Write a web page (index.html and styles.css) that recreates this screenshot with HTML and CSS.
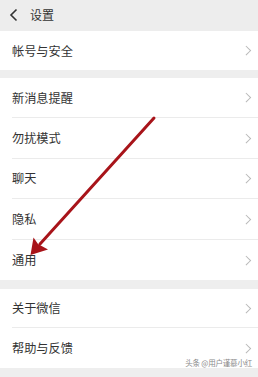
FILE: index.html
```html
<!DOCTYPE html>
<html lang="zh">
<head>
<meta charset="utf-8">
<link rel="stylesheet" href="styles.css">
</head>
<body>
<div class="page">
  <header class="topbar">
    <svg class="back" width="10" height="14" viewBox="0 0 10 14"><path d="M7.5 1.5 L2 7 L7.5 12.5" fill="none" stroke="#333" stroke-width="1.6"/></svg>
    <span class="title">设置</span>
  </header>

  <section class="group g1">
    <div class="row"><span>帐号与安全</span><i class="chev"></i></div>
  </section>

  <section class="group g2">
    <div class="row"><span>新消息提醒</span><i class="chev"></i></div>
    <div class="row"><span>勿扰模式</span><i class="chev"></i></div>
    <div class="row"><span>聊天</span><i class="chev"></i></div>
    <div class="row"><span>隐私</span><i class="chev"></i></div>
    <div class="row"><span>通用</span><i class="chev"></i></div>
  </section>

  <section class="group g3">
    <div class="row"><span>关于微信</span><i class="chev"></i></div>
    <div class="row"><span>帮助与反馈</span><i class="chev"></i></div>
  </section>

  <div class="watermark">头条 @用户谨慕小红</div>

  <svg class="arrow" width="258" height="377" viewBox="0 0 258 377">
    <line x1="154" y1="118" x2="40" y2="244" stroke="#a8141a" stroke-width="3" stroke-linecap="round"/>
    <path d="M30.5 255 L33.5 237.5 L38 244 L48 249.5 Z" fill="#a8141a"/>
  </svg>
</div>
</body>
</html>
```

FILE: styles.css
```css
html, body {
  margin: 0;
  padding: 0;
  background: #eeeeee;
}
.page {
  position: relative;
  width: 258px;
  height: 377px;
  overflow: hidden;
  font-family: "Noto Sans CJK SC", "Noto Sans", sans-serif;
  color: #333;
}
.topbar {
  height: 31px;
  display: flex;
  align-items: center;
  background: #ededed;
  box-sizing: border-box;
  padding-left: 9px;
  padding-bottom: 2px;
}
.back {
  display: block;
}
.title {
  margin-left: 11px;
  font-size: 12px;
  color: #333;
}
.group {
  background: #fff;
  padding-left: 12px;
}
.g2 { margin-top: 8px; }
.g3 { margin-top: 9px; }
.row {
  display: flex;
  align-items: center;
  justify-content: space-between;
  font-size: 12.2px;
  color: #333;
  box-sizing: border-box;
  padding-right: 9px;
  border-bottom: 1px solid #ebebeb;
}
.row:last-child { border-bottom: none; }
.g1 .row { height: 39px; }
.g2 .row { height: 40.4px; }
.g3 .row { height: 39.5px; }
.chev {
  display: block;
  width: 5.5px;
  height: 5.5px;
  border-top: 1px solid #b8b8b8;
  border-right: 1px solid #b8b8b8;
  transform: rotate(45deg);
}
.watermark {
  position: absolute;
  right: 6px;
  top: 357px;
  font-size: 7.5px;
  color: #8a8a8a;
  letter-spacing: -0.2px;
}
.arrow {
  position: absolute;
  left: 0;
  top: 0;
  pointer-events: none;
}
```
